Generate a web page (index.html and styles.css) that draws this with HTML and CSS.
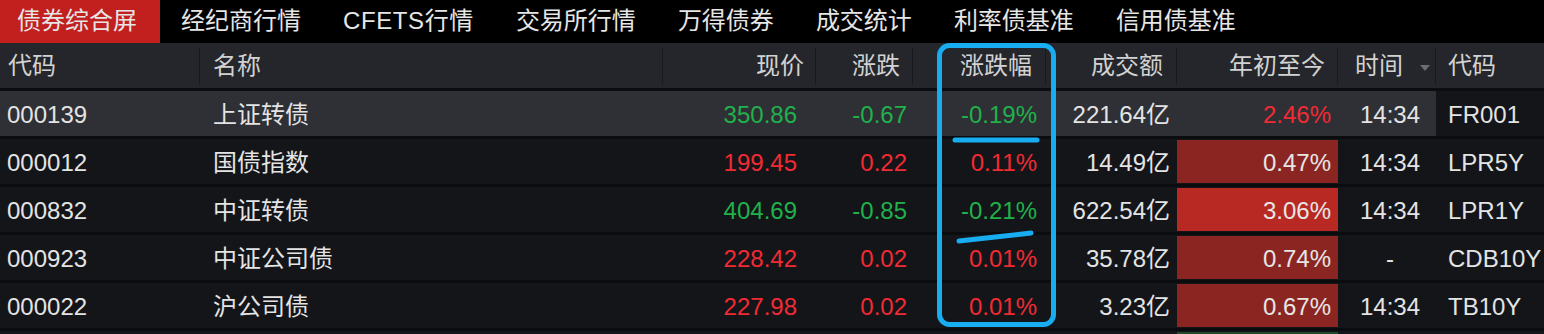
FILE: index.html
```html
<!DOCTYPE html>
<html lang="zh-CN">
<head>
    <meta charset="UTF-8">
    <meta name="viewport" content="width=device-width, initial-scale=1.0">
    <title>债券综合屏</title>
    <link rel="stylesheet" href="styles.css">
</head>
<body>

    <div class="tabs">
        <div class="tab active">债券综合屏</div>
        <div class="tab">经纪商行情</div>
        <div class="tab latin">CFETS行情</div>
        <div class="tab">交易所行情</div>
        <div class="tab">万得债券</div>
        <div class="tab">成交统计</div>
        <div class="tab">利率债基准</div>
        <div class="tab">信用债基准</div>
    </div>

    <table class="quotes">
        <colgroup>
            <col style="width:200px">
            <col style="width:463px">
            <col style="width:153px">
            <col style="width:97px">
            <col style="width:133px">
            <col style="width:131px">
            <col style="width:161px">
            <col style="width:98px">
            <col style="width:108px">
        </colgroup>
        <thead>
            <tr>
                <th class="left sep">代码</th>
                <th class="left name sep">名称</th>
                <th class="price sep">现价</th>
                <th class="chg sep">涨跌</th>
                <th class="pct sep">涨跌幅</th>
                <th class="amt sep">成交额</th>
                <th class="ytd sep">年初至今</th>
                <th class="left time sep">时间
                    <svg class="sort" width="10" height="6" viewBox="0 0 10 6"><path d="M0 0 L10 0 L5 6 Z" fill="#6c6d72"/></svg>
                </th>
                <th class="left bench">代码</th>
            </tr>
        </thead>
        <tbody>
            <tr class="selected">
                <td class="left">000139</td>
                <td class="left name">上证转债</td>
                <td class="price down">350.86</td>
                <td class="chg down">-0.67</td>
                <td class="pct down">-0.19%</td>
                <td class="amt">221.64亿</td>
                <td class="ytd"><div class="ytd-box up">2.46%</div></td>
                <td class="time">14:34</td>
                <td class="left bench">FR001</td>
            </tr>
            <tr>
                <td class="left">000012</td>
                <td class="left name">国债指数</td>
                <td class="price up">199.45</td>
                <td class="chg up">0.22</td>
                <td class="pct up">0.11%</td>
                <td class="amt">14.49亿</td>
                <td class="ytd"><div class="ytd-box red-1">0.47%</div></td>
                <td class="time">14:34</td>
                <td class="left bench">LPR5Y</td>
            </tr>
            <tr>
                <td class="left">000832</td>
                <td class="left name">中证转债</td>
                <td class="price down">404.69</td>
                <td class="chg down">-0.85</td>
                <td class="pct down">-0.21%</td>
                <td class="amt">622.54亿</td>
                <td class="ytd"><div class="ytd-box red-2">3.06%</div></td>
                <td class="time">14:34</td>
                <td class="left bench">LPR1Y</td>
            </tr>
            <tr>
                <td class="left">000923</td>
                <td class="left name">中证公司债</td>
                <td class="price up">228.42</td>
                <td class="chg up">0.02</td>
                <td class="pct up">0.01%</td>
                <td class="amt">35.78亿</td>
                <td class="ytd"><div class="ytd-box red-1">0.74%</div></td>
                <td class="time">-</td>
                <td class="left bench">CDB10Y</td>
            </tr>
            <tr>
                <td class="left">000022</td>
                <td class="left name">沪公司债</td>
                <td class="price up">227.98</td>
                <td class="chg up">0.02</td>
                <td class="pct up">0.01%</td>
                <td class="amt">3.23亿</td>
                <td class="ytd"><div class="ytd-box red-1">0.67%</div></td>
                <td class="time">14:34</td>
                <td class="left bench">TB10Y</td>
            </tr>
            <tr>
                <td></td>
                <td></td>
                <td></td>
                <td></td>
                <td></td>
                <td></td>
                <td class="ytd"><div class="ytd-box green-1"></div></td>
                <td></td>
                <td></td>
            </tr>
        </tbody>
    </table>

    <!-- hand-drawn highlight over the 涨跌幅 column -->
    <svg class="marks" width="1544" height="334" viewBox="0 0 1544 334">
        <rect x="939.5" y="45.5" width="114" height="279" rx="10" fill="none" stroke="#17adf0" stroke-width="5"/>
        <path d="M955 140 L1037 140" stroke="#17adf0" stroke-width="5" stroke-linecap="round" fill="none"/>
        <path d="M959 241 Q 985 238 1031 233" stroke="#17adf0" stroke-width="5" stroke-linecap="round" fill="none"/>
    </svg>

</body>
</html>
```

FILE: styles.css
```css
body {
    margin: 0;
    background-color: #131519;
    color: #e4e4e4;
    font-family: "Liberation Sans", "Noto Sans CJK SC", sans-serif;
    font-size: 24px;
    width: 1544px;
    height: 334px;
    overflow: hidden;
    position: relative;
}

.tabs {
    display: flex;
    height: 43px;
    background-color: #000;
}

.tab {
    padding: 0 21px;
    line-height: 41px;
    color: #e6e6e6;
    white-space: nowrap;
}

.tab.active {
    padding: 0 23px 0 17px;
    background-color: #c21f1f;
}

.tab.latin {
    letter-spacing: 0.6px;
}

.quotes {
    table-layout: fixed;
    width: 1544px;
    border-spacing: 0;
}

th, td {
    padding: 0;
    white-space: nowrap;
    text-align: right;
    font-weight: normal;
}

th {
    height: 45px;
    line-height: 45px;
    color: #d2d2d2;
    background-color: #25262b;
    border-bottom: 3px solid #0c0d10;
}

th.sep {
    background: linear-gradient(#18191d, #18191d) right center / 1px 36px no-repeat, #25262b;
}

td {
    line-height: 42px;
    padding-top: 3px;
    border-bottom: 3px solid #0b0c0f;
}

.left {
    text-align: left;
    padding-left: 7px;
}

th.left {
    padding-left: 8px;
}

th.name,
td.name {
    padding-left: 13px;
}

th.price { padding-right: 12px; }
td.price { padding-right: 19px; }
th.chg { padding-right: 13px; }
td.chg { padding-right: 6px; }
th.pct { padding-right: 14px; }
td.pct { padding-right: 9px; }
th.amt { padding-right: 14px; }
td.amt { padding-right: 7px; }
th.ytd { padding-right: 13px; }

th.time {
    padding-left: 17px;
}

.sort {
    margin-left: 10px;
    vertical-align: middle;
}

td.time {
    text-align: center;
    padding-left: 6px;
}

th.bench,
td.bench {
    padding-left: 12px;
}

td.ytd {
    padding-top: 0;
    vertical-align: top;
}

.ytd-box {
    margin: 1px 0;
    height: 43px;
    line-height: 45px;
    padding-right: 7px;
    overflow: hidden;
}

.selected td {
    background-color: #2e3035;
}

.selected td.bench {
    background-color: #131519;
}

.up {
    color: #f22a33;
}

.down {
    color: #21b14b;
}

.ytd-box.red-1 {
    background-color: #8b2522;
    color: #e6e6e6;
}

.ytd-box.red-2 {
    background-color: #b82923;
    color: #e6e6e6;
}

.ytd-box.green-1 {
    background-color: #1f4a2b;
}

.marks {
    position: absolute;
    left: 0;
    top: 0;
    pointer-events: none;
}
```
